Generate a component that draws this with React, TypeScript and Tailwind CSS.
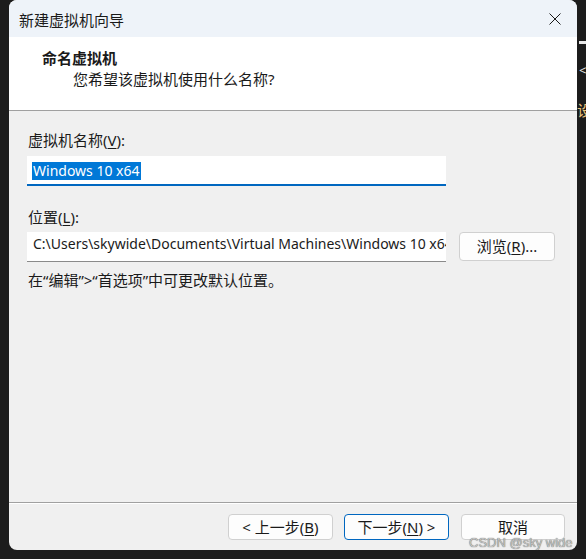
import React from 'react';

function CloseIcon() {
  return (
    <svg width="12" height="12" viewBox="0 0 12 12" fill="none">
      <path d="M0.5 0.5L11.5 11.5M11.5 0.5L0.5 11.5" stroke="#1a1a1a" strokeWidth="1" />
    </svg>
  );
}

function Key({ k }: { k: string }) {
  return <span className="underline underline-offset-[2px] decoration-1">{k}</span>;
}

function FooterButton({ children, primary, w }: { children: React.ReactNode; primary?: boolean; w: string }) {
  return (
    <button
      className={`${w} h-[26px] rounded-[4px] border text-[15px] leading-none text-[#1a1a1a] flex items-center justify-center ${
        primary ? 'border-[#0067c0] bg-[#fdfdfd]' : 'border-[#d0d0d0] bg-[#fdfdfd]'
      }`}
    >
      {children}
    </button>
  );
}

export default function App() {
  return (
    <div className="relative w-[586px] h-[559px] overflow-hidden bg-[#1c1c1c] font-['Noto_Sans','Noto_Sans_CJK_SC',sans-serif] text-[#1a1a1a]">
      {/* bits of the window behind */}
      <div className="absolute left-[579px] top-[41px] w-[7px] h-[3px] bg-[#e8e8e8]" />
      <div className="absolute left-[579px] top-[64px] text-[13px] leading-none text-[#e8e8e8]">&lt;</div>
      <div className="absolute left-[577px] top-[103px] text-[15px] leading-none text-[#e9c27a]">设</div>

      <div className="ml-[9px] w-[568px] h-[550px] rounded-[8px] overflow-hidden bg-[#f0f0f0] flex flex-col">
        {/* title bar */}
        <div className="h-[37px] shrink-0 bg-[#eef3f9] flex items-center justify-between pl-[10px] pr-[16px]">
          <span className="text-[15px] leading-[20px] pt-[2px]">新建虚拟机向导</span>
          <CloseIcon />
        </div>

        {/* header */}
        <div className="h-[74px] shrink-0 bg-white border-b border-[#a0a0a0] pl-[33px] pt-[11px]">
          <div className="text-[15px] leading-[20px] font-bold">命名虚拟机</div>
          <div className="text-[15px] leading-[20px] pl-[31px] mt-[1px]">您希望该虚拟机使用什么名称?</div>
        </div>

        {/* body */}
        <div className="flex-1 px-[18px] pt-[19px]">
          <div className="text-[15px] leading-[20px] ml-[1px]">
            虚拟机名称(<Key k="V" />):
          </div>
          <div className="mt-[6px] w-[419px] h-[30px] bg-white border-b-2 border-[#0067c0] pl-[5px] pt-[2px]">
            <span className="inline-block h-[18px] leading-[18px] bg-[#0078d7] text-white text-[14px] px-px">
              Windows 10 x64
            </span>
          </div>

          <div className="mt-[21px] text-[15px] leading-[20px] ml-[1px]">
            位置(<Key k="L" />):
          </div>
          <div className="mt-[5px] flex items-start">
            <div className="w-[419px] h-[30px] bg-white border-b border-[#8a8a8a] pl-[6px] pt-[2px] overflow-hidden whitespace-nowrap text-[14px] leading-[20px]">
              C:\Users\skywide\Documents\Virtual Machines\Windows 10 x64
            </div>
            <button className="ml-[13px] w-[96px] h-[29px] rounded-[4px] border border-[#d0d0d0] bg-[#fdfdfd] text-[15px] leading-none flex items-center justify-center">
              浏览(<Key k="R" />)...
            </button>
          </div>

          <div className="mt-[8px] text-[15px] leading-[20px] ml-[1px]">
            在“编辑”&gt;“首选项”中可更改默认位置。
          </div>
        </div>

        {/* footer */}
        <div className="h-[48px] shrink-0 border-t border-[#a0a0a0]">
          <div className="border-t border-white h-full flex justify-end items-start pt-[10px] pr-[12px]">
            <FooterButton w="w-[105px]">
              &lt; 上一步(<Key k="B" />)
            </FooterButton>
            <div className="w-[11px]" />
            <FooterButton w="w-[105px]" primary>
              下一步(<Key k="N" />) &gt;
            </FooterButton>
            <div className="w-[12px]" />
            <FooterButton w="w-[104px]">取消</FooterButton>
          </div>
        </div>
      </div>

      {/* watermark */}
      <div className="absolute left-[469px] top-[535px] text-[13px] leading-[16px] font-['Liberation_Sans',sans-serif] text-[#c4c4c4] [text-shadow:0_0_1px_#3a3a3a]">
        CSDN @sky wide
      </div>
    </div>
  );
}
